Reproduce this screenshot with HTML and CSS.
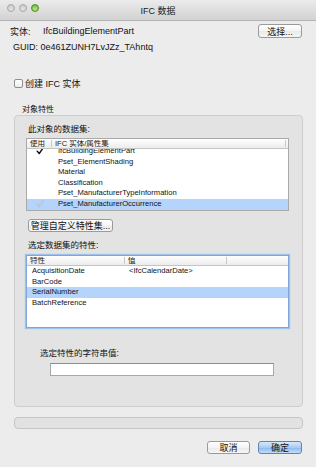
FILE: index.html
```html
<!DOCTYPE html>
<html>
<head>
<meta charset="utf-8">
<link rel="stylesheet" href="styles.css">
</head>
<body>
<div class="window">
  <div class="titlebar">
    <div class="lights">
      <span class="light gray"></span>
      <span class="light gray"></span>
      <span class="light green"></span>
    </div>
    <div class="title">IFC 数据</div>
    <div></div>
  </div>
  <div class="content">
    <div class="entity-row">
      <span class="label">实体:</span>
      <span class="value">IfcBuildingElementPart</span>
      <span class="btn select-btn">选择...</span>
    </div>
    <div class="guid-row">GUID: 0e461ZUNH7LvJZz_TAhntq</div>
    <div class="check-row"><span class="checkbox"></span><span>创建 IFC 实体</span></div>
    <div class="group-label">对象特性</div>
    <div class="group">
      <div class="section-label">此对象的数据集:</div>
      <div class="table">
        <div class="thead t1-cols">
          <span class="th c-use">使用</span>
          <span class="th c-name">IFC 实体/属性集</span>
          <span class="th c-rest"></span>
        </div>
        <div class="tbody">
          <div class="rows scrolled">
            <div class="row t1-cols"><span class="c-use"><svg class="check" viewBox="0 0 10 10"><path d="M1.5 5.2 L4 8.2 L8.8 1.2" fill="none" stroke="#111" stroke-width="1.8" stroke-linecap="round" stroke-linejoin="round"/></svg></span><span class="c-name">IfcBuildingElementPart</span></div>
            <div class="row t1-cols"><span class="c-use"></span><span class="c-name">Pset_ElementShading</span></div>
            <div class="row t1-cols"><span class="c-use"></span><span class="c-name">Material</span></div>
            <div class="row t1-cols"><span class="c-use"></span><span class="c-name">Classification</span></div>
            <div class="row t1-cols"><span class="c-use"></span><span class="c-name">Pset_ManufacturerTypeInformation</span></div>
            <div class="row t1-cols selected"><span class="c-use"><svg class="check" viewBox="0 0 10 10"><path d="M1.5 5.2 L4 8.2 L8.8 1.2" fill="none" stroke="#8a9fb8" stroke-width="1.8" stroke-linecap="round" stroke-linejoin="round"/><path d="M1.5 5.2 L4 8.2 L8.8 1.2" fill="none" stroke="#fff" stroke-width="0.9" stroke-linecap="round" stroke-linejoin="round"/></svg></span><span class="c-name">Pset_ManufacturerOccurrence</span></div>
          </div>
        </div>
      </div>
      <span class="btn manage-btn">管理自定义特性集...</span>
      <div class="section-label s2">选定数据集的特性:</div>
      <div class="table focused">
        <div class="thead t2-cols">
          <span class="th c-prop">特性</span>
          <span class="th c-val">值</span>
          <span class="th c-rest"></span>
        </div>
        <div class="tbody">
          <div class="rows">
            <div class="row t2-cols"><span class="c-prop">AcquisitionDate</span><span class="c-val">&lt;IfcCalendarDate&gt;</span></div>
            <div class="row t2-cols"><span class="c-prop">BarCode</span><span class="c-val"></span></div>
            <div class="row t2-cols selected"><span class="c-prop">SerialNumber</span><span class="c-val"></span></div>
            <div class="row t2-cols"><span class="c-prop">BatchReference</span><span class="c-val"></span></div>
          </div>
        </div>
      </div>
      <div class="section-label s3">选定特性的字符串值:</div>
      <div class="textfield"></div>
    </div>
    <div class="bar"></div>
    <div class="actions">
      <span class="btn cancel-btn">取消</span>
      <span class="btn default-btn">确定</span>
    </div>
  </div>
</div>
</body>
</html>
```
FILE: styles.css
```css
html, body {
  margin: 0;
  padding: 0;
}
body {
  background: #ececec;
  font-family: "Liberation Sans", "Noto Sans CJK SC", sans-serif;
  font-size: 9px;
  color: #111;
}
.window {
  width: 316px;
  height: 467px;
  overflow: hidden;
  background: #ececec;
}
.titlebar {
  height: 20px;
  border-bottom: 1px solid #b4b4b4;
  background: linear-gradient(#ebebeb, #d2d2d2);
  display: grid;
  grid-template-columns: 1fr auto 1fr;
  align-items: center;
}
.lights {
  display: flex;
  gap: 4px;
  padding-left: 7px;
  align-self: start;
  margin-top: 4px;
}
.light {
  width: 8px;
  height: 8px;
  border-radius: 50%;
  box-sizing: border-box;
}
.light.gray {
  background: radial-gradient(circle at 50% 70%, #e4e4e4, #c3c3c3);
  border: 1px solid #a9a9a9;
}
.light.green {
  background: radial-gradient(circle at 50% 70%, #b6e88a, #62b034);
  border: 1px solid #4f8e2c;
}
.title {
  font-size: 9px;
  color: #222;
}
.content {
  padding: 0 13px 0 10px;
}
.entity-row {
  margin-top: 3px;
  height: 14px;
  display: flex;
  align-items: center;
}
.label {
  width: 33px;
}
.value {
  flex: 1;
}
.btn {
  display: inline-flex;
  align-items: center;
  justify-content: center;
  box-sizing: border-box;
  border: 1px solid #9a9a9a;
  border-radius: 3px;
  background: linear-gradient(#ffffff, #f4f4f4 50%, #e9e9e9 51%, #f6f6f6);
  font-size: 9px;
  color: #111;
}
.select-btn {
  width: 44px;
  height: 14px;
  margin-right: 1px;
}
.guid-row {
  margin-top: 3px;
  height: 12px;
  line-height: 12px;
  padding-left: 3px;
}
.check-row {
  margin-top: 24px;
  height: 12px;
  display: flex;
  align-items: center;
  gap: 2px;
  padding-left: 4px;
}
.checkbox {
  width: 9px;
  height: 9px;
  box-sizing: border-box;
  border: 1px solid #8e8e8e;
  border-radius: 2px;
  background: linear-gradient(#ffffff, #ededed);
}
.group-label {
  margin-top: 16px;
  height: 10px;
  line-height: 10px;
  padding-left: 12px;
  font-size: 8px;
}
.group {
  margin-left: 4px;
  box-sizing: border-box;
  border: 1px solid #cdcdcd;
  border-radius: 4px;
  background: #e3e3e3;
  padding: 8px 13px 30px 11px;
}
.section-label {
  height: 10px;
  line-height: 10px;
  padding-left: 2px;
  font-size: 8.5px;
}
.table {
  margin-top: 4px;
  border: 1px solid #a9a9a9;
  background: #fff;
}
.table.focused {
  margin-top: 5px;
  border-color: #7fa6d6;
  box-shadow: 0 0 1px 1px #9fc2ec;
}
.thead {
  height: 9px;
  border-bottom: 1px solid #c4c4c4;
  background: linear-gradient(#ffffff, #ececec);
  font-size: 7.5px;
  line-height: 9px;
  color: #222;
}
.t1-cols {
  display: grid;
  grid-template-columns: 25px 234px 1fr;
}
.t2-cols {
  display: grid;
  grid-template-columns: 98px 102px 1fr;
}
.th {
  padding-left: 3px;
  border-right: 1px solid #c8c8c8;
  height: 7px;
  margin-top: 1px;
  line-height: 7px;
  overflow: hidden;
}
.th.c-rest {
  border-right: none;
}
.tbody {
  height: 61px;
  overflow: hidden;
}
.rows.scrolled {
  margin-top: -3px;
}
.row {
  height: 10.6px;
  line-height: 10.6px;
  white-space: nowrap;
  font-size: 7.6px;
}
.row.selected {
  background: #b5d4fb;
}
.row .c-use {
  display: flex;
  align-items: center;
  justify-content: center;
  padding-left: 0;
}
.row .c-name {
  padding-left: 6px;
}
.row .c-prop {
  padding-left: 5px;
}
.row .c-val {
  padding-left: 4px;
}
.check {
  width: 8px;
  height: 8px;
  margin-left: 0;
}
.manage-btn {
  margin-top: 8px;
  margin-left: 2px;
  width: 85px;
  height: 13px;
}
.section-label.s2 {
  margin-top: 8px;
}
.section-label.s3 {
  margin-top: 20px;
  padding-left: 14px;
}
.textfield {
  margin-top: 5px;
  margin-left: 24px;
  width: 224px;
  height: 13px;
  box-sizing: border-box;
  border: 1px solid #a8a8a8;
  border-top-color: #8c8c8c;
  background: #fff;
}
.bar {
  margin-top: 10px;
  margin-left: 4px;
  height: 12px;
  box-sizing: border-box;
  border: 1px solid #c6c6c6;
  border-radius: 4px;
  background: #e2e2e2;
}
.actions {
  margin-top: 12px;
  display: flex;
  justify-content: flex-end;
  gap: 8px;
  padding-right: 1px;
}
.cancel-btn {
  width: 43px;
  height: 13px;
}
.default-btn {
  width: 44px;
  height: 13px;
  border-color: #5f83b6;
  background: linear-gradient(#d9e9fb, #a9cbf3 50%, #8ab7ee 51%, #c3ddf9);
}
```
